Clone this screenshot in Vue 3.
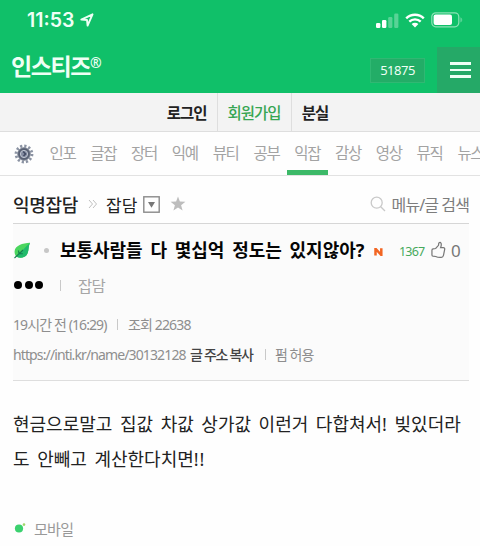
<template>
  <div class="page">
    <header class="header">
      <div class="status">
        <span class="time">11:53</span>
        <svg class="location" viewBox="0 0 14 14">
          <path d="M1.3 6.6 12.5 1.3 7.6 12.6 7 7Z" />
        </svg>
        <svg class="signal" viewBox="0 0 24 15">
          <rect x="0" y="10" width="4.4" height="5" rx="1.2" />
          <rect x="6" y="7" width="4.4" height="8" rx="1.2" />
          <rect class="weak" x="12.2" y="4" width="4.2" height="11" rx="1.2" />
          <rect class="weak" x="18.2" y="0.5" width="4.2" height="14.5" rx="1.2" />
        </svg>
        <svg class="wifi" viewBox="0 0 20 15">
          <path d="M1.2 5.3a12.6 12.6 0 0 1 17.6 0M4.3 8.7a8.2 8.2 0 0 1 11.4 0" />
          <path class="dot" d="M6.6 11.1a4.9 4.9 0 0 1 6.8 0L10 14.6Z" />
        </svg>
        <svg class="battery" viewBox="0 0 32 16">
          <rect class="shell" x="0.8" y="0.8" width="27" height="14" rx="4" />
          <rect x="2.6" y="2.6" width="18.4" height="10.4" rx="2" />
          <path class="weak" d="M29.3 5.3q2 .8 2 2.6t-2 2.6Z" />
        </svg>
      </div>
      <div class="brand">
        <span class="logo">인스티즈<sup>®</sup></span>
        <span class="online">51875</span>
        <button class="menu" aria-label="메뉴"><i></i><i></i><i></i></button>
      </div>
    </header>

    <nav class="account">
      <a>로그인</a>
      <a class="join">회원가입</a>
      <a>분실</a>
    </nav>

    <nav class="tabs">
      <svg class="gear" viewBox="0 0 20 20">
        <circle class="teeth" cx="10" cy="10" r="8" />
        <circle class="body" cx="10" cy="10" r="6.2" />
        <circle class="ring" cx="10" cy="10" r="3.6" />
        <path class="hub" d="M9.2 7.5 11.5 10 9.5 12" />
      </svg>
      <a v-for="tab in tabs" :key="tab" :class="{ active: tab === '익잡' }">{{ tab }}</a>
    </nav>

    <main class="board">
      <div class="board-head">
        <strong>익명잡담</strong>
        <svg class="crumb" viewBox="0 0 10 10"><path d="M1 1l3.5 4L1 9M5 1l3.5 4L5 9" /></svg>
        <span class="category">잡담</span>
        <svg class="select" viewBox="0 0 17 17">
          <rect x="0.8" y="0.8" width="15.4" height="15.4" />
          <path d="M5 6h7l-3.5 5.8Z" />
        </svg>
        <svg class="star" viewBox="0 0 16 16">
          <path d="M8 .5l1.9 5.1 5.5.2-4.3 3.4 1.5 5.3L8 11.4l-4.6 3.1 1.5-5.3L.6 5.8l5.5-.2Z" />
        </svg>
        <svg class="search" viewBox="0 0 16 16">
          <circle cx="6.7" cy="6.7" r="5.5" />
          <path d="M10.7 10.7 15 15" />
        </svg>
        <span class="search-text">메뉴/글 검색</span>
      </div>

      <section class="post">
        <div class="title">
          <svg class="leaf" viewBox="0 0 17 17">
            <path class="blade" d="M16.5.8C9 1.2 1.5 3.6 1.1 9.2c-.2 2.6.9 4.7 2 5.6 3.8 1.7 9.2 1.1 11-3.5C15.6 7.5 14.800 4 16.500.8Z" />
            <path class="shade" d="M16.500.8C14.800 4 15.600 7.500 14.100 11.300c-1.800 4.600-7.200 5.200-11 3.500C7 10.500 11 6 16.500.8Z" />
            <path class="vein" d="M1 16 9.500 8M5.500 11.800 5 8.500M5.500 11.800h3.800" />
          </svg>
          <i class="bullet"></i>
          <h1>보통사람들 다 몇십억 정도는 있지않아?</h1>
          <svg class="new" viewBox="0 0 9 8"><path d="M1.500 7.500V.7L7.300 7V.3" /></svg>
          <span class="count">1367</span>
          <svg class="thumb" viewBox="0 0 16 18">
            <path d="M1 9.200q0-1.200 1.300-1.400L5 7.400 8 4l.3-2.300Q9.800.2 10.700 1.800q.7 2-.5 4.700h2.900q1.800.1 1.500 1.800l-1.300 6.400q-.5 2-2.300 2.200-3.500.3-6-1L2.200 15.600Q1 15.400 1 14.200Z" />
          </svg>
          <span class="likes">0</span>
        </div>
        <div class="author">
          <span class="dots"><i></i><i></i><i></i></span>
          <i class="bar"></i>
          <span>잡담</span>
        </div>
        <div class="meta date">
          <span class="ago">19시간 전 (16:29)</span>
          <i class="bar"></i>
          <span class="views">조회 22638</span>
        </div>
        <div class="meta link">
          <span class="url">https://inti.kr/name/30132128</span>
          <b>글 주소 복사</b>
          <i class="bar"></i>
          <span class="allow">펌 허용</span>
        </div>
      </section>

      <p class="content">현금으로말고 집값 차값 상가값 이런거 다합쳐서! 빚있더라<br>도 안빼고 계산한다치면<span class="bang">!!</span></p>

      <div class="device">
        <svg viewBox="0 0 12 12">
          <circle cx="5" cy="6.500" r="4.100" />
          <circle class="spark" cx="10" cy="2.600" r="1.300" />
        </svg>
        <span>모바일</span>
      </div>
    </main>
  </div>
</template>

<script setup>
const tabs = ['인포', '글잡', '장터', '익예', '뷰티', '공부', '익잡', '감상', '영상', '뮤직', '뉴스']
</script>

<style>
body {
  margin: 0;
  background: #fff;
}
</style>

<style scoped>
.page {
  width: 480px;
  height: 546px;
  overflow: hidden;
  background: #fefefe;
  color: #222;
  font-family: "Noto Sans", "Noto Sans CJK KR", sans-serif;
  white-space: nowrap;
}

svg {
  display: block;
  flex: none;
}

span, a, b, strong, h1 {
  flex: none;
}

.header {
  height: 93px;
  background: #10c069;
  color: #effff5;
}

.status {
  display: flex;
  align-items: center;
  height: 40px;
  padding: 0 17px 0 27px;
}

.time {
  width: 49px;
  font: 600 19.5px/40px Inter, sans-serif;
}

.location {
  width: 14px;
  height: 14px;
  margin-left: 4px;
  fill: none;
  stroke: #effff5;
  stroke-width: 1.9;
  stroke-linejoin: round;
}

.signal {
  width: 24px;
  height: 15px;
  margin-left: auto;
  fill: #fff;
}

.weak {
  opacity: 0.3;
}

.wifi {
  width: 20px;
  height: 15px;
  margin-left: 5px;
  fill: none;
  stroke: #fff;
  stroke-width: 2.4;
}

.wifi .dot {
  fill: #fff;
  stroke: none;
}

.battery {
  width: 32px;
  height: 16px;
  margin-left: 6px;
  fill: #fff;
}

.battery .shell {
  fill: none;
  stroke: #8be2b5;
  stroke-width: 1.2;
}

.brand {
  display: flex;
  height: 53px;
}

.logo {
  margin-left: 11px;
  font-size: 23px;
  font-weight: 600;
  line-height: 53px;
  letter-spacing: -1.4px;
}

.logo sup {
  font-size: 14px;
  line-height: 0;
  vertical-align: 7px;
}

.online {
  width: 55px;
  height: 25px;
  margin: 18px 12px 0 auto;
  background: #23ad67;
  box-sizing: border-box;
  border: 1px solid #30b873;
  font-size: 13px;
  line-height: 22px;
  letter-spacing: -0.5px;
  text-align: center;
}

.menu {
  display: flex;
  flex-direction: column;
  align-items: center;
  gap: 4px;
  width: 43px;
  height: 46px;
  margin: 7px 0 0;
  padding: 15px 0 0 3px;
  border: 0;
  background: #25a967;
}

.menu i {
  width: 21px;
  height: 2.6px;
  background: #effff5;
}

.account {
  display: flex;
  justify-content: center;
  height: 38px;
  padding-left: 15px;
  background: #f3f3f3;
  border-bottom: 1px solid #dedede;
}

.account a {
  padding: 0 10px;
  font-size: 15.5px;
  font-weight: 600;
  line-height: 40px;
  letter-spacing: -1px;
}

.account a + a {
  border-left: 1px solid #dedede;
}

.account .join {
  color: #37a653;
  font-weight: 500;
}

.tabs {
  display: flex;
  align-items: center;
  height: 43px;
  padding-left: 14px;
  border-bottom: 1px solid #e2e2e2;
}

.gear {
  width: 20px;
  height: 20px;
  margin-right: 8px;
  fill: none;
}

.gear .teeth {
  stroke: #8b93a3;
  stroke-width: 2.8;
  stroke-dasharray: 2.2 1.99;
}

.gear .body {
  fill: #596174;
  stroke: #747c8c;
}

.gear .ring {
  fill: #858da2;
  stroke: #c0c6d2;
}

.gear .hub {
  stroke: #414a62;
  stroke-width: 1.5;
}

.tabs a {
  width: 40.8px;
  height: 43px;
  box-sizing: border-box;
  color: #a3a3a3;
  font-size: 15.5px;
  line-height: 43px;
  letter-spacing: -1.3px;
  text-align: center;
}

.tabs .active {
  border-bottom: 5px solid #3cb968;
}

.board {
  padding: 0 11px 0 13px;
}

.board-head {
  display: flex;
  align-items: center;
  height: 48px;
  border-bottom: 1px solid #d6d6d6;
  box-sizing: border-box;
  padding-top: 9px;
}

.board-head strong {
  width: 75px;
  font-size: 18px;
  font-weight: 500;
  letter-spacing: -0.3px;
}

.crumb {
  width: 10px;
  height: 10px;
  fill: none;
  stroke: #c0c0c0;
}

.category {
  width: 38px;
  margin-left: 8px;
  font-size: 17px;
}

.select {
  width: 17px;
  height: 17px;
  margin-left: -1px;
  fill: none;
  stroke: #8a8a8a;
  stroke-width: 1.4;
}

.select path {
  fill: #777;
  stroke: none;
}

.star {
  width: 16px;
  height: 16px;
  margin-left: 10px;
  fill: #bdbdbd;
}

.search {
  width: 16px;
  height: 16px;
  margin-left: auto;
  fill: none;
  stroke: #c9c9c9;
  stroke-width: 1.3;
}

.search-text {
  margin-left: 6px;
  color: #7d7d7d;
  font-size: 16px;
  letter-spacing: -0.9px;
}

.post {
  width: 456px;
  height: 156px;
  background: #fbfbfb;
  border-bottom: 1px solid #dedede;
}

.title {
  display: flex;
  align-items: center;
  height: 52px;
}

.leaf {
  width: 18px;
  height: 17px;
}

.blade {
  fill: #4bd65f;
}

.shade {
  fill: #20ba6b;
}

.vein {
  fill: none;
  stroke: #167e50;
  stroke-width: 1.1;
}

.bullet {
  width: 5px;
  height: 5px;
  margin: 0 11px 0 13px;
  border-radius: 50%;
  background: #c7c7c7;
}

h1 {
  width: 314px;
  margin: -2px 0 0;
  color: #050505;
  font-size: 18px;
  font-weight: 700;
  letter-spacing: -0.04px;
  word-spacing: 3.2px;
}

.new {
  width: 9px;
  height: 8px;
  margin-top: 4px;
  fill: none;
  stroke: #f26522;
  stroke-width: 2.5;
}

.count {
  width: 32px;
  margin: 3px 0 0 16px;
  color: #46a95c;
  font-size: 12.5px;
  letter-spacing: -0.8px;
}

.thumb {
  width: 15px;
  height: 18px;
  fill: none;
  stroke: #777;
  stroke-width: 1.3;
}

.likes {
  margin-left: 5px;
  color: #777;
  font-size: 17px;
}

.author {
  display: flex;
  align-items: center;
  height: 18px;
  color: #a6a6a6;
  font-size: 15.5px;
  letter-spacing: -0.7px;
}

.dots {
  display: flex;
  gap: 2.5px;
  margin: 0 17px 0 1px;
}

.dots i {
  width: 8px;
  height: 8px;
  border-radius: 50%;
  background: #000;
}

.bar {
  width: 1px;
  height: 11px;
  background: #c9c9c9;
}

.author .bar {
  margin-right: 17px;
}

.meta {
  display: flex;
  align-items: center;
  height: 30px;
  color: #8e8e8e;
  font-size: 14px;
  letter-spacing: -0.86px;
}

.date {
  padding-top: 15px;
}

.ago {
  width: 104px;
  letter-spacing: -0.9px;
}

.views {
  margin-left: 10px;
}

.url {
  width: 177px;
  letter-spacing: -0.88px;
}

.meta b {
  width: 75px;
  color: #444;
  font-weight: 500;
  letter-spacing: -1.3px;
}

.allow {
  margin-left: 9px;
  letter-spacing: -1px;
}

.content {
  margin: 26px 0 0;
  font-size: 18px;
  line-height: 34.5px;
  word-spacing: 2.9px;
}

.bang {
  letter-spacing: 1px;
}

.device {
  display: flex;
  align-items: center;
  height: 20px;
  margin-top: 42px;
  color: #999;
  font-size: 15px;
  letter-spacing: -0.7px;
}

.device svg {
  width: 12px;
  height: 12px;
  margin: 0 8px 0 1px;
  fill: #3bd16f;
}

.device .spark {
  fill: #9fd568;
}
</style>
